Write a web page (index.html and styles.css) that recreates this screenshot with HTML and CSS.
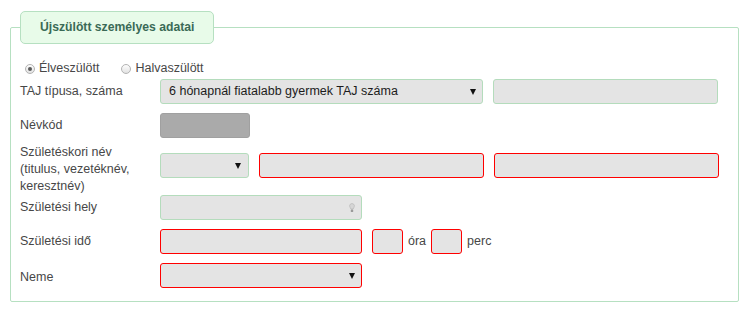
FILE: index.html
```html
<!DOCTYPE html>
<html lang="hu">
<head>
<meta charset="utf-8">
<title>Újszülött személyes adatai</title>
<link rel="stylesheet" href="styles.css">
</head>
<body>
<fieldset class="panel">
  <legend class="panel-title">Újszülött személyes adatai</legend>

  <div class="radio-row">
    <label class="radio"><span class="radio-dot is-checked"></span>Élveszülött</label>
    <label class="radio"><span class="radio-dot"></span>Halvaszülött</label>
  </div>

  <div class="row row-first">
    <div class="label">TAJ típusa, száma</div>
    <div class="fields">
      <div class="field is-ok is-select w-taj"><span class="select-text">6 hónapnál fiatalabb gyermek TAJ száma</span><span class="caret"></span></div>
      <div class="field is-ok w-wide"></div>
    </div>
  </div>

  <div class="row row-gap">
    <div class="label">Névkód</div>
    <div class="fields">
      <div class="field is-disabled w-short"></div>
    </div>
  </div>

  <div class="row row-multi">
    <div class="label label-multi">Születéskori név<br>(titulus, vezetéknév,<br>keresztnév)</div>
    <div class="fields">
      <div class="field is-ok is-select w-title"><span class="select-text"></span><span class="caret"></span></div>
      <div class="field is-error w-name"></div>
      <div class="field is-error w-wide"></div>
    </div>
  </div>

  <div class="row">
    <div class="label">Születési hely</div>
    <div class="fields">
      <div class="field is-ok w-mid has-icon">
        <svg class="bulb" width="6" height="10" viewBox="0 0 6 10" aria-hidden="true">
          <path d="M3 0.6 C1.5 0.6 0.6 1.7 0.6 3 C0.6 4.2 1.6 4.8 1.8 6 L4.2 6 C4.4 4.8 5.4 4.2 5.4 3 C5.4 1.7 4.5 0.6 3 0.6 Z" fill="#d6d6d6" stroke="#b4b4b4" stroke-width="0.6"/>
          <rect x="1.8" y="6.4" width="2.4" height="2.6" rx="0.5" fill="#9a9a9a"/>
        </svg>
      </div>
    </div>
  </div>

  <div class="row row-gap">
    <div class="label">Születési idő</div>
    <div class="fields">
      <div class="field is-error w-mid"></div>
      <div class="time-group">
        <div class="field is-error w-tiny"></div>
        <span class="unit">óra</span>
        <div class="field is-error w-tiny"></div>
        <span class="unit">perc</span>
      </div>
    </div>
  </div>

  <div class="row row-gap">
    <div class="label label-low">Neme</div>
    <div class="fields">
      <div class="field is-error is-select w-mid"><span class="select-text"></span><span class="caret"></span></div>
    </div>
  </div>
</fieldset>
</body>
</html>
```

FILE: styles.css
```css
html, body {
  margin: 0;
  padding: 0;
  background: #ffffff;
}

body {
  font-family: "Liberation Sans", Arial, sans-serif;
  font-size: 12.5px;
  color: #474747;
}

.panel {
  margin: 11px 12px 0 10px;
  padding: 16px 19px 13px 9px;
  border: 1px solid #b6e0c1;
  border-radius: 2px;
  min-width: 0;
}

.panel-title {
  padding: 0 19px;
  margin: 0;
  height: 33px;
  box-sizing: border-box;
  line-height: 31px;
  border: 1px solid #b6e0c1;
  border-radius: 5px;
  background: #e8fbe9;
  color: #3a6a56;
  font-weight: bold;
  font-size: 12.2px;
}

/* radio row */
.radio-row {
  display: flex;
  align-items: center;
  height: 17px;
  padding-left: 5px;
  gap: 22px;
}

.radio {
  display: flex;
  align-items: center;
  gap: 4px;
  line-height: 17px;
}

.radio-dot {
  width: 10px;
  height: 10px;
  box-sizing: border-box;
  border-radius: 50%;
  border: 1px solid #b3b3b3;
  background: linear-gradient(#fdfdfd, #e2e2e2);
  display: flex;
  align-items: center;
  justify-content: center;
}

.radio-dot.is-checked::after {
  content: "";
  width: 4px;
  height: 4px;
  border-radius: 50%;
  background: #5a5a5a;
}

/* form rows */
.row {
  display: flex;
  align-items: center;
}

.row-first { margin-top: 2px; }
.row-gap { margin-top: 9px; }

.row-multi {
  align-items: flex-start;
  margin-top: 15px;
}

.label {
  width: 140px;
  flex: none;
  line-height: 17px;
  color: #474747;
}

.label-multi {
  margin-top: -9px;
}

.label-low {
  padding-top: 3px;
}

.fields {
  display: flex;
  align-items: center;
  gap: 10px;
}

.field {
  height: 25px;
  box-sizing: border-box;
  border-radius: 3px;
  background: #e4e4e4;
  border: 1px solid #b4dcbc;
}

.field.is-error { border-color: #ff0000; }
.field.is-disabled {
  background: #aaaaaa;
  border-color: #a0a0a0;
}

.is-select {
  display: flex;
  align-items: center;
  padding: 0 6px 0 8px;
  color: #1c1c1c;
}

.select-text {
  flex: 1;
  white-space: nowrap;
  line-height: 17px;
}

.caret {
  width: 0;
  height: 0;
  border-left: 3.5px solid transparent;
  border-right: 3.5px solid transparent;
  border-top: 6px solid #111111;
}

.has-icon {
  display: flex;
  align-items: center;
  justify-content: flex-end;
  padding-right: 6px;
}

.bulb { display: block; }

.w-taj { width: 323px; }
.w-wide { width: 225px; }
.w-short { width: 90px; }
.w-title { width: 89px; padding-right: 7px; }
.w-name { width: 225px; }
.w-mid { width: 202px; }
.w-tiny { width: 31px; }

.time-group {
  display: flex;
  align-items: center;
  gap: 5px;
}

.unit {
  color: #474747;
  line-height: 17px;
}
```
